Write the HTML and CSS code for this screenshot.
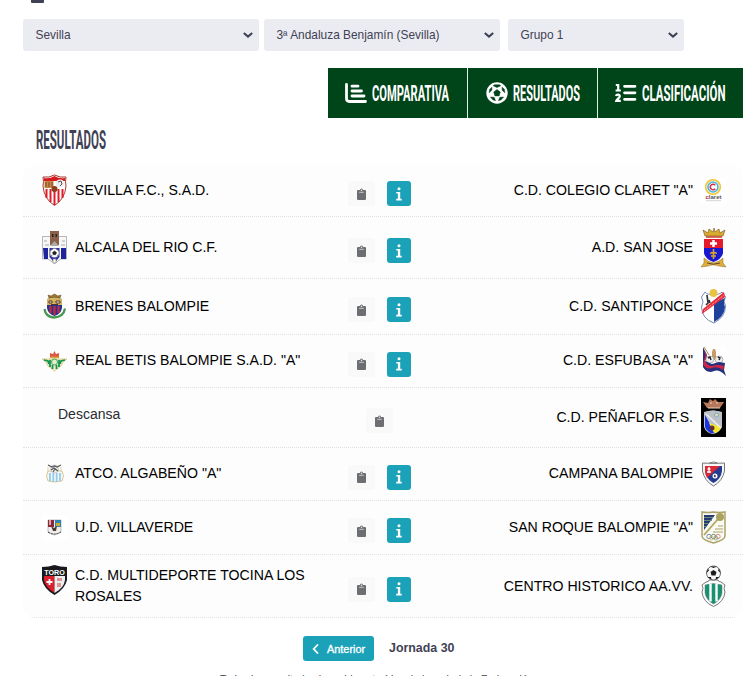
FILE: index.html
```
<!DOCTYPE html>
<html lang="es">
<head>
  <meta charset="UTF-8">
  <meta name="viewport" content="width=device-width, initial-scale=1.0">
  <title>Resultados</title>
  <link rel="stylesheet" href="styles.css">
</head>
<body>
  <!-- shared icons -->
  <svg class="defs" width="0" height="0">
    <symbol id="chevron" viewBox="0 0 12 8"><path d="M1.8 2 6 5.6 10.2 2" fill="none" stroke="#3f4254" stroke-width="2.1"/></symbol>
    <symbol id="clipboard" viewBox="0 0 9 12">
      <path d="M1 2h2a1.5 1.5 0 0 1 3 0h2q1 0 1 1v8q0 1-1 1H1q-1 0-1-1V3q0-1 1-1z" fill="#6d6e72"/>
      <path d="M2.2 4.3h4.6" stroke="#c9c9cb" stroke-width="1"/><circle cx="4.5" cy="2.2" r=".7" fill="#f8f8f8"/>
    </symbol>
    <symbol id="info" viewBox="0 0 8 14"><circle cx="4" cy="1.8" r="1.5"/><path d="M1.3 5h3.9v6.8h1.5v1.6H1.200v-1.600h1.700V6.600H1.300z"/></symbol>
    <symbol id="ball" viewBox="0 0 22 22">
      <circle cx="11" cy="11" r="10.7" fill="#fff"/>
      <path d="m11 7.6 3.3 2.4-1.2 3.900H8.900L7.700 10zM7.200 3.800 11 5.500l3.800-1.700-1.400-1H8.600zM3.200 10.800l2.600-2.600.2-3-2.300 2zM18.800 10.800l-2.600-2.600-.2-3 2.300 2zM4.400 15.100l3.800.2 1.300 3.300-2.500-.7zM17.600 15.100l-3.800.2-1.300 3.300 2.500-.7z" fill="#00451a" stroke="#00451a" stroke-width=".5"/>
    </symbol>
  </svg>

  <div class="topbar"><span class="tab-mark"></span></div>

  <div class="filters">
    <button class="select wide">Sevilla <svg width="12" height="8"><use href="#chevron"/></svg></button>
    <button class="select wide">3ª Andaluza Benjamín (Sevilla) <svg width="12" height="8"><use href="#chevron"/></svg></button>
    <button class="select group">Grupo 1 <svg width="12" height="8"><use href="#chevron"/></svg></button>
  </div>

  <nav class="menu">
    <a class="menu-item compare">
      <svg width="22" height="20" viewBox="0 0 22 20" fill="none" stroke="#fff" stroke-linecap="round" stroke-linejoin="round"><path d="M1.500 1.500v14q0 3 3 3h16" stroke-width="2.800"/><path d="M7 3.200h6M7 8h9.500M7 13h12" stroke-width="2.800"/></svg>
      <svg width="79" height="24"><text class="narrow" x="0" y="20" textLength="77" lengthAdjust="spacingAndGlyphs">COMPARATIVA</text></svg>
    </a>
    <a class="menu-item results">
      <svg width="22" height="22"><use href="#ball"/></svg>
      <svg width="69" height="24"><text class="narrow" x="0" y="20" textLength="67" lengthAdjust="spacingAndGlyphs">RESULTADOS</text></svg>
    </a>
    <a class="menu-item ranking">
      <svg width="22" height="20" viewBox="0 0 22 20" fill="none" stroke="#fff"><path d="M9.500 3.300H20M9.500 9.800H20M9.500 16.300H20" stroke-width="2.700" stroke-linecap="round"/><path d="M.8 2h2.400v5.500M.6 7.500h5.200M1 13c.5-2 4-1.800 3.800.3-.1 1.400-3 3-3.500 4.600h4.500" stroke-width="2.200"/></svg>
      <svg width="85" height="26"><text class="narrow" x="0" y="21" textLength="83.500" lengthAdjust="spacingAndGlyphs">CLASIFICACIÓN</text></svg>
    </a>
  </nav>

  <h1 class="title"><svg width="72" height="28"><text class="narrow title-text" x="0" y="23" textLength="70" lengthAdjust="spacingAndGlyphs">RESULTADOS</text></svg></h1>

  <main class="matches">
    <div class="match r1">
      <div class="team home">
        <svg class="crest" width="25" height="31" viewBox="0 0 25 31"><path d="M1 2Q7 3 12.500 0 18 3 24 2q-1 5 0 9-1 13-11.500 19.500Q2 24 1 11q1-4 0-9z" fill="#fff" stroke="#a33b2c"/><path d="M2 3q6 1 10.500-2Q17 4 23 3v3H2z" fill="#d71920"/><path d="M4.500 14v9M8.500 14v13M12.500 14v16M16.500 14v13M20.500 14v9" stroke="#e01b2b" stroke-width="2"/><path d="M2.500 6h9v7h-9z" fill="#c98a44"/><path d="M4 7v5M7 7v5M10 7v5" stroke="#774322"/><circle cx="18" cy="8.500" r="4" fill="#eee"/><path d="m16 7 3-1 1 3-2 2" fill="none" stroke="#555"/><circle cx="12.500" cy="14" r="3" fill="#8c3d1e"/></svg>
        <span>SEVILLA F.C., S.A.D.</span>
      </div>
      <div class="actions"><a class="btn-clip"><svg width="9" height="12"><use href="#clipboard"/></svg></a><a class="btn-info"><svg width="8" height="14"><use href="#info"/></svg></a></div>
      <div class="team away"><span>C.D. COLEGIO CLARET "A"</span>
        <svg class="crest" width="25" height="25" viewBox="0 0 25 25"><path fill="#fff" d="M0 0h25v25H0z"/><circle cx="12" cy="9" r="7.300" fill="none" stroke="#f2c230" stroke-width="1.600"/><circle cx="12" cy="9" r="5" fill="none" stroke="#45b5d8" stroke-width="1.600"/><path d="M14.200 7.200a2.800 2.800 0 1 0 0 3.600" fill="none" stroke="#d52c55" stroke-width="1.600"/><text x="4.500" y="21" class="claret"><tspan fill="#b71c3c">c</tspan>laret</text><path d="M5 22.700h15" stroke="#d6d6d6"/></svg>
      </div>
    </div>

    <div class="match r2">
      <div class="team home">
        <svg class="crest" width="25" height="33" viewBox="0 0 25 33"><path d="M.5 5.500h24V28H19l-6.500 4.500L6 28H.5z" fill="#f7f7f7" stroke="#999" stroke-width=".7"/><path d="M8 0h9v14H8z" fill="#8a6048"/><path d="M10 3h1.500v3H10zM13.500 3H15v3h-1.500z" fill="#222"/><path d="m8 15 4.500-5 4.500 5" fill="#aaa"/><path d="M1 17h5v11H2zM19 17h5v11h-5z" fill="#1e249c"/><path d="M7.500 17h10v9l-5 6-5-6z" fill="#2a31a5"/><circle cx="12.500" cy="22" r="4.500" fill="#fff" stroke="#777" stroke-width=".5"/><path d="m12.500 20 2 1.500-.8 2.200h-2.400l-.8-2.200zM9 19l2-1M14 18l2 1M9 25l1.500-1M15 24l1.500 1" fill="#222" stroke="#333" stroke-width=".6"/><path d="M11 28h3v4h-3zM2 10h3M3 14h4M20 10h3M19 14h4" fill="#fff" stroke="#888" stroke-width=".7"/></svg>
        <span>ALCALA DEL RIO C.F.</span>
      </div>
      <div class="actions"><a class="btn-clip"><svg width="9" height="12"><use href="#clipboard"/></svg></a><a class="btn-info"><svg width="8" height="14"><use href="#info"/></svg></a></div>
      <div class="team away"><span>A.D. SAN JOSE</span>
        <svg class="crest" width="25" height="41" viewBox="0 0 25 41"><path d="m4 9-2-6 5 3 1-4 4 3 1-4 1 4 4-3 1 4 5-3-2 6z" fill="#d9ac30" stroke="#765018" stroke-width=".6"/><path d="M5 10h16" stroke="#cb3a29" stroke-width="1.500"/><path d="M3 12h19v9H3z" fill="#e51a2b"/><path d="M3 21h19v5q-1 6-9.500 9Q4 32 3 26z" fill="#1718d0"/><path d="M12.500 13v7M9 16.500h7" stroke="#fff" stroke-width="2.500"/><path d="M12.500 22v10M9.500 27q1-3 3 0 2-3 3 0M10 29h5" fill="none" stroke="#d5a62f" stroke-width="1.600"/><path d="m3 31 0 5-3 4 7-1q5-2.500 11 0l7 1-3-4v-5q-4 4-9 5-6-1-10-5z" fill="#dcae3c" stroke="#8d6820" stroke-width=".5"/><path d="M6 36q6 2.500 13 0" fill="none" stroke="#6a4a17"/></svg>
      </div>
    </div>

    <div class="match r3">
      <div class="team home">
        <svg class="crest" width="25" height="25" viewBox="0 0 25 25"><path d="m7 4-1-3 3 1 3.500-2L16 2l3-1-1 3z" fill="#9c762b" stroke="#61451e" stroke-width=".5"/><path d="M2.500 15q1 8 9.500 8.500 9.500-.5 11-9" fill="none" stroke="#4a9855" stroke-width="2.300"/><path d="M5 5q7-3 15 0v9q-1 6-7.500 8Q6 20 5 14z" fill="#26358c"/><path d="M5 5q7-3 15 0v6H5z" fill="#d6b45d"/><path d="M8.500 12v7M12.500 12v9M16.500 12v7" stroke="#c72742" stroke-width="2.200"/><path d="M7 7h3v2H7zM14 7h4v2h-4zM9 10.500h7" fill="#fff" stroke="#533525"/></svg>
        <span>BRENES BALOMPIE</span>
      </div>
      <div class="actions"><a class="btn-clip"><svg width="9" height="12"><use href="#clipboard"/></svg></a><a class="btn-info"><svg width="8" height="14"><use href="#info"/></svg></a></div>
      <div class="team away"><span>C.D. SANTIPONCE</span>
        <svg class="crest" width="25" height="35" viewBox="0 0 25 35"><path d="M4 3q3 4 8 1 5 3 9-1l3.500 5q-3 4 0 9 0 11-11.500 17Q1 30 .5 18q3-5 0-10z" fill="#fff" stroke="#7889b5"/><path d="M13 14 24 9q-2 4 0 9-1 10-11 15z" fill="#1e419c"/><circle cx="12.500" cy="4" r="3.900" fill="#eac343"/><path d="m1 25 1-5L23 3l1 5z" fill="#e82936"/><path d="m3 22 20-16" stroke="#fff" stroke-width=".8" stroke-dasharray="1 1"/><path d="m6 6 1 8-2 2M8 11l1 3" fill="none" stroke="#333" stroke-width="1.700"/></svg>
      </div>
    </div>

    <div class="match r4">
      <div class="team home">
        <svg class="crest" width="25" height="20" viewBox="0 0 25 20"><path d="M8 6V2l3 1 1.500-3L14 3l3-1v4z" fill="#dc5945"/><path d="M8 6.500h9" stroke="#dba93b" stroke-width="1.500"/><path d="M0 8h25l-4 3-2 4-6.500 5L6 15l-2-4z" fill="#f3edcc" stroke="#d3ba6b" stroke-width=".7"/><path d="m2 9 4 1 1 3M23 9l-4 1-1 3M8 9v7M17 9v7M10.500 14v4M14.500 14v4" fill="none" stroke="#139450" stroke-width="1.800"/><circle cx="12.500" cy="11" r="3" fill="#e5eec7" stroke="#3ba463"/></svg>
        <span>REAL BETIS BALOMPIE S.A.D. "A"</span>
      </div>
      <div class="actions"><a class="btn-clip"><svg width="9" height="12"><use href="#clipboard"/></svg></a><a class="btn-info"><svg width="8" height="14"><use href="#info"/></svg></a></div>
      <div class="team away"><span>C.D. ESFUBASA "A"</span>
        <svg class="crest" width="25" height="30" viewBox="0 0 25 30"><path fill="#fff" d="M0 0h25v30H0z"/><path d="M11 14V6l1-3h2l1 3v8z" fill="#c69b69"/><ellipse cx="9" cy="13.500" rx="4" ry="3.500" fill="#eee" stroke="#888" stroke-width=".6"/><ellipse cx="18" cy="13.500" rx="4" ry="3.500" fill="#eee" stroke="#888" stroke-width=".6"/><path d="m7 12 2-1 1 3M17 11l2 1-1 2" fill="none" stroke="#222" stroke-width="1.400"/><path d="m2 1 4 8-2 6 7 3 7-2 6 1-1 7 2 6q-7-7-12-5-7 3-11-4z" fill="#26317c"/><path d="m3 5 1.500 4L2 18q3 6 9 4 6-2 11 2l1-4q-6-2-12 0-5 0-7-5l2-6z" fill="#cf2546"/><path d="m3 1 5 8" stroke="#b48447"/></svg>
      </div>
    </div>

    <div class="match r5">
      <div class="team home rest"><span>Descansa</span></div>
      <div class="actions"><a class="btn-clip"><svg width="9" height="12"><use href="#clipboard"/></svg></a></div>
      <div class="team away"><span>C.D. PEÑAFLOR F.S.</span>
        <svg class="crest" width="25" height="39" viewBox="0 0 25 39"><path d="M0 0h25v39H0z"/><path d="m6 10-4-6 5 1 2-4 3 2 2-2 3 3 6 0-4 6z" fill="#b7775b"/><path d="M7 10h12M9 5h2M15 5h2" stroke="#edd1ba"/><path d="M3 14q9-3 18 0v15q-3 6-9 7-7-1-9-7z" fill="#bfc4ca"/><path d="M4 17 14 35q-4 1-6-1-4-3-4-6z" fill="#1a32e5"/><path d="M8 25 13 35q6-1 7-6z" fill="#f5e62a"/><path d="M4 14 20 30V14q-8-3-16 0z" fill="#bcc1c8"/><path d="m5 16 15 14" stroke="#eee" stroke-width="1.500"/><circle cx="15.500" cy="17" r="2" fill="#e5df9a" stroke="#7fa9cc"/><circle cx="11" cy="30" r="2.500" fill="#613230"/></svg>
      </div>
    </div>

    <div class="match r6">
      <div class="team home">
        <svg class="crest" width="25" height="19" viewBox="0 0 25 19"><path d="M6 7Q3 12 6 17q7 2 14 0 3-5 0-10z" fill="#f7f8f6" stroke="#d9c798"/><path d="M8 9v8M11.300 9v9M14.700 9v9M18 9v8" stroke="#93cbe8" stroke-width="1.800"/><circle cx="12.500" cy="5" r="4" fill="#eee" stroke="#aaa" stroke-width=".5"/><path d="m6 1 4 2 2.500-1L15 3l4-2M9 6l3-2 4 3M11 8l2-3" fill="none" stroke="#555" stroke-width="1.200"/><path d="M6 3v5M19 3v5" stroke="#e2cfa3"/></svg>
        <span>ATCO. ALGABEÑO "A"</span>
      </div>
      <div class="actions"><a class="btn-clip"><svg width="9" height="12"><use href="#clipboard"/></svg></a><a class="btn-info"><svg width="8" height="14"><use href="#info"/></svg></a></div>
      <div class="team away"><span>CAMPANA BALOMPIE</span>
        <svg class="crest" width="25" height="26" viewBox="0 0 25 26"><path d="M1.500 2q6 1 11-1Q17 3 23.500 2v8q-2 10-11 15Q3.500 20 1.500 10z" fill="#f7f7f7" stroke="#777"/><path d="M4 5h17v5q-1 8-8.500 12Q5 18 4 10z" fill="#233b91"/><path d="M4 5h15L6 17q-2-4-2-7z" fill="#d92836"/><path d="M8 6v6M6.500 8h3M6 11h4" stroke="#fff" stroke-width="1.300"/><circle cx="14" cy="15" r="2.500" fill="#fff"/><path d="m14 13.500 1 1.500-1 1.500-1.500-1.500z" fill="#333"/><path d="M8 2.500h9" stroke="#888"/></svg>
      </div>
    </div>

    <div class="match r7">
      <div class="team home">
        <svg class="crest" width="25" height="25" viewBox="0 0 25 25"><path fill="#fff" d="M0 0h25v25H0z"/><path d="M6 5h13v12q-3 2-6.500 3Q9 19 6 17z" fill="#eee" stroke="#999" stroke-width=".6"/><path d="M6 5h6v7H6z" fill="#8e2734"/><path d="M8 5v5" stroke="#eee" stroke-width="1.300"/><path d="M13 5h6v7h-6z" fill="#3183b5"/><path d="M14 8h4v3h-4z" fill="#c3af37"/><path d="m9 11 3 2 3-2-1 5h-3z" fill="#513a34"/><path d="M6 17q6 4 13 0" fill="none" stroke="#333" stroke-dasharray="2 1"/></svg>
        <span>U.D. VILLAVERDE</span>
      </div>
      <div class="actions"><a class="btn-clip"><svg width="9" height="12"><use href="#clipboard"/></svg></a><a class="btn-info"><svg width="8" height="14"><use href="#info"/></svg></a></div>
      <div class="team away"><span>SAN ROQUE BALOMPIE "A"</span>
        <svg class="crest" width="25" height="33" viewBox="0 0 25 33"><path d="M1 1q6 1 11.500 0Q18 2 24 1v24q0 4-11.500 7Q1 29 1 25z" fill="#fafaf4" stroke="#aaa267" stroke-width="1.500"/><path d="M3 4h11L3 19z" fill="#2b3a70"/><path d="M3 6.500h9M3 9.500h8M3 12.500h5M3 15.500h3" stroke="#648f7d"/><path d="M3 24 17 8" stroke="#b2a85d" stroke-width="1.800"/><circle cx="19" cy="6" r="4" fill="#aaa25e"/><path d="M17 15h5M14 18h8M12 21h10" stroke="#c5bf91" stroke-width="1.300"/><g fill="none" stroke-width=".8"><circle cx="8" cy="25.500" r="2.200" stroke="#4a77b6"/><circle cx="12.500" cy="25.500" r="2.200" stroke="#666"/><circle cx="17" cy="25.500" r="2.200" stroke="#d6746a"/><circle cx="10.300" cy="27" r="2" stroke="#ddb755"/><circle cx="14.800" cy="27" r="2" stroke="#6aa783"/></g></svg>
      </div>
    </div>

    <div class="match r8">
      <div class="team home">
        <svg class="crest" width="25" height="30" viewBox="0 0 25 30"><path d="M0 2q7 0 12.500-2Q18 2 25 2v13q-2 9-12.500 15Q2 24 0 15z" fill="#17191d"/><path d="M2 11h10.500v17Q3 22 2 15z" fill="#d9202c"/><path d="M12.500 11H23v4q-1 8-10.500 13z" fill="#eee"/><text x="2.200" y="9.500" class="toro" textLength="20.500" lengthAdjust="spacingAndGlyphs">TORO</text><path d="M7.500 14v6M4.500 17h6" stroke="#fff" stroke-width="1.800"/><path d="M15 13h5v3h-5zM15 18h4v4h-4z" fill="#dc9696"/></svg>
        <span>C.D. MULTIDEPORTE TOCINA LOS ROSALES</span>
      </div>
      <div class="actions"><a class="btn-clip"><svg width="9" height="12"><use href="#clipboard"/></svg></a><a class="btn-info"><svg width="8" height="14"><use href="#info"/></svg></a></div>
      <div class="team away"><span>CENTRO HISTORICO AA.VV.</span>
        <svg class="crest" width="25" height="42" viewBox="0 0 25 42"><path d="M5 17q3 0 3-2h9q0 2 3 2l4 3q-2 3 0 7-1 10-11.500 14.500Q2 37 1 27q2-4 0-7z" fill="#fff" stroke="#777"/><path d="M4 20q8-3 17 0v8q-1 7-8.500 11Q5 35 4 28z" fill="#169271" stroke="#777" stroke-width=".5"/><path d="M9.500 18.500v18M15.500 18.500v18" stroke="#fff" stroke-width="2.400"/><circle cx="12.500" cy="8" r="7" fill="#f7f7f7" stroke="#444" stroke-width=".8"/><path d="m12.500 5 3 2-1 3.500h-4l-1-3.500zM9 1.500l3.500 1.500 3.500-1.500zM5.500 8l2.500-2.500-1-2zM19.500 8 17 5.500l1-2zM6.500 12l3.500 0 .5 2.800zM18.500 12h-3.500l-.5 2.800z" fill="#1c1c1c"/></svg>
      </div>
    </div>
  </main>

  <div class="pager">
    <a class="prev"><svg width="7" height="10" viewBox="0 0 7 10"><path d="M5.500 1 1.700 5l3.800 4" fill="none" stroke="#fff" stroke-width="1.800" stroke-linecap="round"/></svg> Anterior</a>
    <strong class="round">Jornada 30</strong>
  </div>
  <p class="source">Todos los resultados han sido extraídos de la web de la Federación</p>
</body>
</html>
```
FILE: styles.css
```
* {
  box-sizing: border-box;
}

body {
  margin: 0;
  width: 751px;
  height: 676px;
  overflow: hidden;
  background: #fff;
  color: #3f4254;
  font-family: "Liberation Sans", Arial, sans-serif;
}

svg {
  display: block;
  flex: none;
  overflow: visible;
}

.defs {
  position: absolute;
}

.topbar {
  height: 19px;
  padding-left: 31px;
}

.tab-mark {
  display: block;
  width: 13px;
  height: 3px;
  background: #3f4254;
  border-radius: 0 0 1px 1px;
}

.filters {
  display: flex;
  gap: 5px;
  padding-left: 23px;
}

.select {
  display: flex;
  align-items: center;
  justify-content: space-between;
  height: 32px;
  padding: 0 5px 0 12.500px;
  border: 0;
  border-radius: 3px;
  background: #ebecf2;
  color: #3f4254;
  font: 11.900px "Liberation Sans", Arial, sans-serif;
}

.wide {
  width: 236px;
}

.group {
  width: 176px;
  margin-left: 3px;
}

.menu {
  display: flex;
  width: 415px;
  height: 50px;
  margin: 17px 0 0 328px;
}

.menu-item {
  display: flex;
  align-items: center;
  gap: 5px;
  background: #00451a;
  border-right: 1px solid #e4ece6;
}

.compare {
  width: 140px;
  padding-left: 17px;
}

.results {
  width: 130px;
  padding-left: 18px;
}

.ranking {
  width: 145px;
  padding-left: 17px;
  border-right: 0;
}

.narrow {
  font-family: Roboto, sans-serif;
  font-size: 22px;
  font-weight: 700;
  fill: #fff;
}

.title {
  height: 47px;
  margin: 0;
  padding: 8px 0 0 36px;
}

.title-text {
  font-size: 25px;
  fill: #3f4254;
}

.matches {
  width: 720px;
  margin-left: 23px;
  background: #fdfdfd;
  border-radius: 12px;
  overflow: hidden;
}

.match {
  display: grid;
  grid-template-columns: 315px 92px 313px;
  border-bottom: 1px dotted #e2e2e2;
}

.r1 { height: 52px; }
.r2 { height: 62px; }
.r3 { height: 56px; }
.r4 { height: 53px; }
.r5 { height: 60px; }
.r6 { height: 53px; }
.r7 { height: 54px; }
.r8 { height: 63px; }

.team {
  display: flex;
  align-items: center;
  gap: 8px;
  color: #000;
  font-size: 14.140px;
  line-height: 21px;
}

.home {
  padding: 0 20px 1px 19px;
}

.away {
  justify-content: flex-end;
  padding: 0 17px 1px 0;
}

.rest {
  padding: 0 0 6px 35px;
  color: #292b32;
  font-size: 14px;
}

.r8 .home .crest {
  margin-bottom: 12px;
}

.r8 .away {
  padding-bottom: 0;
}

.actions {
  display: flex;
  align-items: center;
  gap: 12px;
  padding: 6px 0 0 10px;
}

.r5 .actions {
  padding-left: 28px;
}

.btn-clip,
.btn-info {
  display: flex;
  align-items: center;
  justify-content: center;
  height: 25px;
  border-radius: 3px;
}

.btn-clip {
  width: 27px;
  background: #f9f9f9;
}

.btn-info {
  width: 24px;
  background: #1ba2b9;
  fill: #fff;
}

.claret {
  font: 700 6px "Liberation Sans", sans-serif;
  fill: #555;
}

.toro {
  font: 700 8px "Liberation Sans", sans-serif;
  fill: #fff;
}

.pager {
  display: flex;
  align-items: center;
  gap: 15px;
  margin-top: 18px;
  padding-left: 303px;
}

.prev {
  display: flex;
  align-items: center;
  gap: 8px;
  width: 71px;
  height: 25px;
  padding-left: 9px;
  border-radius: 3px;
  background: #1ba2b9;
  color: #fff;
  font-size: 10.900px;
  -webkit-text-stroke: 0.300px #fff;
  white-space: nowrap;
}

.round {
  padding-bottom: 2px;
  font-size: 12.400px;
}

.source {
  width: 330px;
  margin: 11px 0 0 220px;
  font-size: 10.500px;
  line-height: 14px;
  white-space: nowrap;
}
```
